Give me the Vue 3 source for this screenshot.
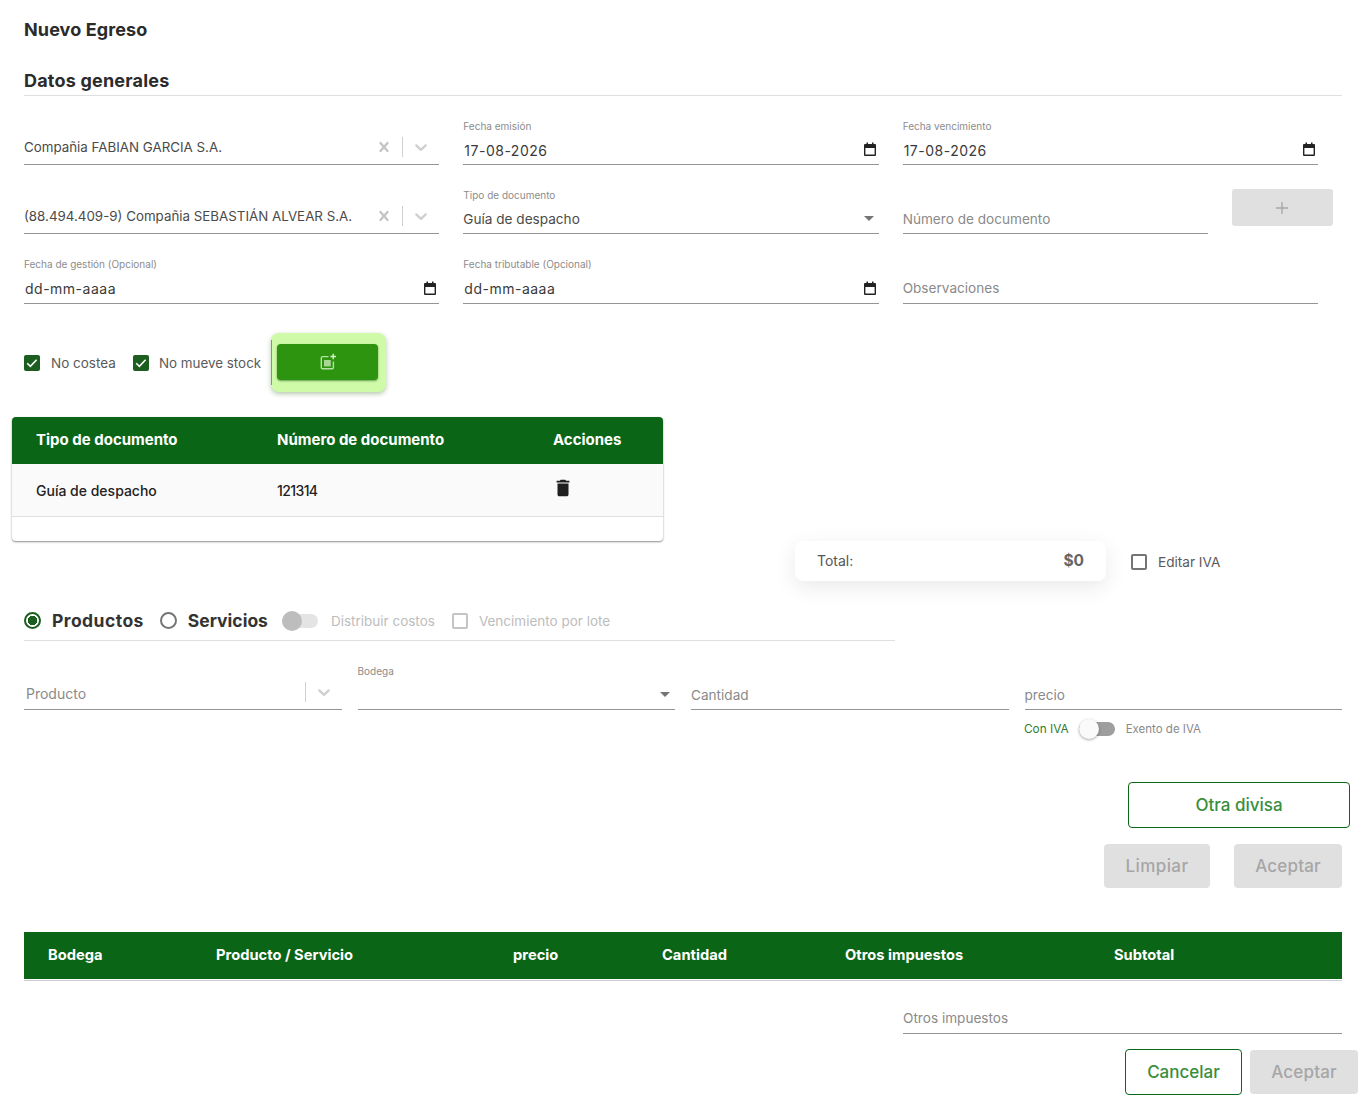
<script setup>
const cal = "M3 2h1.5V0.6H6V2h4V0.6h1.5V2H13a1 1 0 0 1 1 1v10a1 1 0 0 1-1 1H3a1 1 0 0 1-1-1V3a1 1 0 0 1 1-1zM3.4 6v6.6h9.2V6z";
const clearIcon = "M14.348 14.849c-0.469 0.469-1.229 0.469-1.697 0l-2.651-3.030-2.651 3.029c-0.469 0.469-1.229 0.469-1.697 0-0.469-0.469-0.469-1.229 0-1.697l2.758-3.15-2.759-3.152c-0.469-0.469-0.469-1.228 0-1.697s1.228-0.469 1.697 0l2.652 3.031 2.651-3.031c0.469-0.469 1.228-0.469 1.697 0s0.469 1.229 0 1.697l-2.758 3.152 2.758 3.15c0.469 0.469 0.469 1.229 0 1.698z";
const chevron = "M4.516 7.548c0.436-0.446 1.043-0.481 1.576 0l3.908 3.747 3.908-3.747c0.533-0.481 1.141-0.446 1.574 0 0.436 0.445 0.408 1.197 0 1.615-0.406 0.418-4.695 4.502-4.695 4.502-0.217 0.223-0.502 0.335-0.787 0.335s-0.57-0.112-0.789-0.335c0 0-4.287-4.084-4.695-4.502s-0.436-1.17 0-1.615z";
const detailCols = ["Bodega", "Producto / Servicio", "precio", "Cantidad", "Otros impuestos", "Subtotal"];
</script>

<template>
  <div class="page">
    <h1 class="title">Nuevo Egreso</h1>
    <h2 class="section">Datos generales</h2>

    <div class="form3">
      <div class="field select">
        <span class="text">Compañia FABIAN GARCIA S.A.</span>
        <svg class="x" viewBox="0 0 20 20"><path :d="clearIcon" /></svg>
        <i class="sep"></i>
        <svg class="chev" viewBox="0 0 20 20"><path :d="chevron" /></svg>
      </div>
      <div class="field">
        <label>Fecha emisión</label>
        <div class="value"><span class="date">17-08-2026</span><svg class="cal" viewBox="0 0 16 16"><path :d="cal" fill-rule="evenodd" /></svg></div>
      </div>
      <div class="field">
        <label>Fecha vencimiento</label>
        <div class="value"><span class="date">17-08-2026</span><svg class="cal" viewBox="0 0 16 16"><path :d="cal" fill-rule="evenodd" /></svg></div>
      </div>

      <div class="field select">
        <span class="text">(88.494.409-9) Compañia SEBASTIÁN ALVEAR S.A.</span>
        <svg class="x" viewBox="0 0 20 20"><path :d="clearIcon" /></svg>
        <i class="sep"></i>
        <svg class="chev" viewBox="0 0 20 20"><path :d="chevron" /></svg>
      </div>
      <div class="field">
        <label>Tipo de documento</label>
        <div class="value"><span class="text">Guía de despacho</span><i class="caret"></i></div>
      </div>
      <div class="doc-number">
        <div class="field grow">
          <div class="value"><span class="ph">Número de documento</span></div>
        </div>
        <button class="plus" disabled>
          <svg viewBox="0 0 14 14" width="14" height="14"><path d="M7 1v12M1 7h12" stroke="#a6a6a6" stroke-width="1.3" fill="none" /></svg>
        </button>
      </div>

      <div class="field low">
        <label>Fecha de gestión (Opcional)</label>
        <div class="value"><span class="date">dd-mm-aaaa</span><svg class="cal" viewBox="0 0 16 16"><path :d="cal" fill-rule="evenodd" /></svg></div>
      </div>
      <div class="field low">
        <label>Fecha tributable (Opcional)</label>
        <div class="value"><span class="date">dd-mm-aaaa</span><svg class="cal" viewBox="0 0 16 16"><path :d="cal" fill-rule="evenodd" /></svg></div>
      </div>
      <div class="field low">
        <div class="value"><span class="ph">Observaciones</span></div>
      </div>
    </div>

    <div class="options">
      <span class="check on"><svg viewBox="0 0 16 16"><path d="M3.2 8.2l3.2 3.2 6.2-6.6" stroke="#fff" stroke-width="1.6" fill="none" /></svg></span>
      <span class="opt-label first">No costea</span>
      <span class="check on"><svg viewBox="0 0 16 16"><path d="M3.2 8.2l3.2 3.2 6.2-6.6" stroke="#fff" stroke-width="1.6" fill="none" /></svg></span>
      <span class="opt-label second">No mueve stock</span>
      <div class="glow">
        <button class="add-doc">
          <svg viewBox="0 0 18 18" width="18" height="18">
            <path d="M9.5 3.6H3.6a1.3 1.3 0 0 0-1.3 1.3v9.5a1.3 1.3 0 0 0 1.3 1.3h9.5a1.3 1.3 0 0 0 1.3-1.3V8.6" stroke="#b9e0a6" stroke-width="1.4" fill="none" />
            <rect x="5" y="7" width="6.8" height="6.4" fill="#a9d595" />
            <path d="M14.2 0.8v5.4M11.5 3.5h5.4" stroke="#d9f2cd" stroke-width="1.4" fill="none" />
          </svg>
        </button>
      </div>
    </div>

    <div class="doc-table">
      <div class="doc-row head">
        <span>Tipo de documento</span>
        <span>Número de documento</span>
        <span>Acciones</span>
      </div>
      <div class="doc-row body">
        <span>Guía de despacho</span>
        <span class="num">121314</span>
        <span class="trash"><svg viewBox="0 0 24 24" width="22" height="22"><path d="M6 19c0 1.1.9 2 2 2h8c1.1 0 2-.9 2-2V7H6v12zM19 4h-3.5l-1-1h-5l-1 1H5v2h14V4z" fill="#1f1f1f" /></svg></span>
      </div>
      <div class="doc-foot"></div>
    </div>

    <div class="totals">
      <div class="total-card">
        <span>Total:</span>
        <b>$0</b>
      </div>
      <span class="check"></span>
      <span class="edit-iva">Editar IVA</span>
    </div>

    <div class="kind">
      <span class="radio on"></span>
      <span class="kind-label wide-label">Productos</span>
      <span class="radio"></span>
      <span class="kind-label">Servicios</span>
      <span class="switch off"><i></i></span>
      <span class="muted">Distribuir costos</span>
      <span class="check disabled"></span>
      <span class="muted">Vencimiento por lote</span>
    </div>

    <div class="form4">
      <div class="field select product">
        <span class="ph">Producto</span>
        <i class="sep"></i>
        <svg class="chev" viewBox="0 0 20 20"><path :d="chevron" /></svg>
      </div>
      <div class="field">
        <label>Bodega</label>
        <div class="value"><span class="text"></span><i class="caret"></i></div>
      </div>
      <div class="field">
        <div class="value"><span class="ph">Cantidad</span></div>
      </div>
      <div class="field">
        <div class="value"><span class="ph">precio</span></div>
      </div>
    </div>

    <div class="iva">
      <span class="iva-on">Con IVA</span>
      <span class="switch iva-switch"><i></i></span>
      <span class="iva-off">Exento de IVA</span>
    </div>

    <div class="divisa">
      <button class="btn outline wide">Otra divisa</button>
    </div>
    <div class="actions">
      <button class="btn gray limpiar" disabled>Limpiar</button>
      <button class="btn gray aceptar" disabled>Aceptar</button>
    </div>

    <div class="detail-head">
      <span v-for="col in detailCols" :key="col">{{ col }}</span>
    </div>

    <div class="others">
      <div class="field grow">
        <div class="value"><span class="ph">Otros impuestos</span></div>
      </div>
    </div>

    <div class="footer">
      <button class="btn outline cancel">Cancelar</button>
      <button class="btn gray aceptar" disabled>Aceptar</button>
    </div>
  </div>
</template>

<style>
body {
  background: #fff;
}
</style>

<style scoped>
.page {
  font-family: Inter, "Noto Sans", sans-serif;
  color: #333;
  height: 1103px;
  overflow: hidden;
}

button {
  font-family: inherit;
}

.title {
  margin: 0 24px;
  height: 60px;
  box-sizing: border-box;
  padding-bottom: 2px;
  display: flex;
  align-items: center;
  font-size: 18px;
  font-weight: 700;
  color: #2b2b2b;
  letter-spacing: 0.1px;
}

.section {
  margin: 0 24px;
  height: 36px;
  box-sizing: border-box;
  padding-top: 5px;
  display: flex;
  align-items: center;
  font-size: 18px;
  font-weight: 700;
  color: #2b2b2b;
  letter-spacing: 0.2px;
  border-bottom: 1px solid #e0e0e0;
}

.form3 {
  display: grid;
  grid-template-columns: repeat(3, 1fr);
  grid-template-rows: 69px 69px 70px;
  column-gap: 24px;
  padding: 0 48px 0 24px;
}

.field {
  display: flex;
  flex-direction: column;
  justify-content: flex-end;
  min-width: 0;
  border-bottom: 1px solid #949494;
  align-self: end;
}

.field label {
  font-size: 10px;
  line-height: 12px;
  color: #8c8c8c;
  margin-bottom: 4px;
}

.low label {
  margin-bottom: 5px;
}

.value {
  height: 28px;
  display: flex;
  align-items: center;
  justify-content: space-between;
  font-size: 14px;
}

.low .value span {
  margin-bottom: 2px;
}

.text {
  font-size: 13.6px;
  color: #4a4a4a;
  white-space: nowrap;
}

.ph {
  font-size: 13.6px;
  color: #8a8a8a;
  white-space: nowrap;
}

.date {
  font-size: 14px;
  color: #3a3a3a;
  letter-spacing: 0.5px;
  padding-left: 1px;
}

.cal {
  width: 16px;
  height: 16px;
  margin-right: 1px;
  fill: #222;
}

.select {
  flex-direction: row;
  align-items: center;
  justify-content: flex-start;
  height: 34px;
  box-sizing: border-box;
  padding-bottom: 1px;
}

.select .text,
.select .ph {
  flex: 1;
}

.select .text {
  font-size: 13.35px;
}

.select .ph {
  font-size: 14px;
  margin-top: 2px;
}

.x {
  width: 20px;
  height: 20px;
  fill: #c4c4c4;
  margin-right: 8px;
}

.sep {
  display: block;
  width: 1px;
  height: 20px;
  background: #d0d0d0;
  margin-right: 8px;
}

.chev {
  width: 20px;
  height: 20px;
  fill: #cfcfcf;
  margin-right: 8px;
}

.caret {
  display: block;
  width: 0;
  height: 0;
  margin: 0 5px 1px 0;
  border-left: 5px solid transparent;
  border-right: 5px solid transparent;
  border-top: 5px solid #757575;
}

.doc-number {
  display: flex;
  align-items: flex-end;
  gap: 24px;
  margin-right: -15px;
}

.grow {
  flex: 1;
}

.plus {
  width: 101px;
  height: 37px;
  margin-bottom: 8px;
  border: 0;
  border-radius: 3px;
  background: #e0e0e0;
  display: flex;
  align-items: center;
  justify-content: center;
  padding: 0 2px 0 0;
}

.options {
  margin-top: 29px;
  padding-left: 24px;
  height: 59px;
  display: flex;
  align-items: center;
}

.check {
  box-sizing: border-box;
  width: 16px;
  height: 16px;
  border: 2px solid #757575;
  border-radius: 2px;
  flex-shrink: 0;
  display: block;
}

.check.on {
  background: #1b5e20;
  border: 0;
}

.check.on svg {
  display: block;
}

.check.disabled {
  border-color: #c4c4c4;
}

.opt-label {
  margin-left: 11px;
  font-size: 13.5px;
  color: #5a5a5a;
}

.opt-label.first {
  margin-right: 17px;
}

.opt-label.second {
  margin-left: 10px;
  font-size: 13.4px;
}

.glow {
  position: relative;
  margin-left: 10px;
  width: 115px;
  height: 59px;
  box-sizing: border-box;
  padding: 11px 8px 12px 6px;
  background: #cffba8;
  border-radius: 8px;
  box-shadow: 0 2px 5px rgba(90, 130, 70, 0.45);
}

.glow::before {
  content: "";
  position: absolute;
  left: 0;
  top: 7px;
  bottom: 7px;
  width: 1px;
  background: #5ab83a;
}

.add-doc {
  width: 101px;
  height: 36px;
  border: 0;
  border-radius: 4px;
  background: #2d9410;
  box-shadow: 0 1px 2px rgba(0, 60, 0, 0.5);
  display: flex;
  align-items: center;
  justify-content: center;
  padding: 0;
}

.doc-table {
  margin: 25px 0 0 12px;
  width: 651px;
  border-radius: 4px;
  overflow: hidden;
  background: #fff;
  box-shadow: 0 1px 2px rgba(0, 0, 0, 0.45);
  height: 124px;
}

.doc-row {
  display: grid;
  grid-template-columns: 241px 276px 1fr;
  padding-left: 24px;
  align-items: center;
}

.doc-row.head {
  height: 47px;
  box-sizing: border-box;
  padding-bottom: 2px;
  background: #0b6516;
  color: #fff;
  font-size: 15px;
  font-weight: 700;
}

.doc-row.body {
  height: 53px;
  box-sizing: border-box;
  background: #fafafa;
  border-bottom: 1px solid #e0e0e0;
  color: #222;
  font-size: 14px;
  font-weight: 500;
}

.num {
  letter-spacing: -0.6px;
}

.doc-foot {
  height: 24px;
}

.trash {
  margin: -5px 0 0 -1px;
  height: 22px;
}

.trash svg {
  display: block;
}

.totals {
  display: flex;
  align-items: center;
  padding-left: 795px;
  height: 40px;
}

.total-card {
  width: 311px;
  height: 40px;
  box-sizing: border-box;
  padding: 0 22px 2px;
  border-radius: 8px;
  background: #fff;
  box-shadow: 0 6px 22px rgba(0, 0, 0, 0.09);
  display: flex;
  align-items: center;
  justify-content: space-between;
  font-size: 14px;
  color: #555;
}

.total-card b {
  font-size: 15.5px;
  font-weight: 700;
  color: #666;
}

.totals .check {
  margin: 2px 0 0 25px;
}

.edit-iva {
  margin: 1px 0 0 11px;
  font-size: 13.6px;
  color: #5a5a5a;
}

.kind {
  margin: 20px 0 0 24px;
  width: 871px;
  height: 40px;
  box-sizing: border-box;
  border-bottom: 1px solid #e0e0e0;
  display: flex;
  align-items: center;
}

.radio {
  box-sizing: border-box;
  width: 17px;
  height: 17px;
  border: 2px solid #757575;
  border-radius: 50%;
  flex-shrink: 0;
}

.radio.on {
  border-color: #1b5e20;
  background: radial-gradient(circle, #1b5e20 0 4.5px, #fff 5px);
}

.kind-label {
  margin: 0 14px 0 11px;
  font-size: 17.5px;
  font-weight: 700;
  color: #333;
}

.wide-label {
  margin-right: 16px;
  letter-spacing: 0.45px;
}

.switch {
  position: relative;
  display: block;
  width: 36px;
  height: 14px;
  border-radius: 7px;
  background: #9e9e9e;
  flex-shrink: 0;
}

.switch i {
  position: absolute;
  left: 0;
  top: -3px;
  width: 20px;
  height: 20px;
  border-radius: 50%;
  background: #fafafa;
  box-shadow: 0 1px 3px rgba(0, 0, 0, 0.35);
}

.switch.off {
  background: #e4e4e4;
}

.switch.off i {
  background: #bdbdbd;
  box-shadow: none;
}

.muted {
  font-size: 13.5px;
  color: #bdbdbd;
  margin: 0 17px 0 13px;
}

.check.disabled + .muted {
  margin-left: 11px;
}

.form4 {
  display: grid;
  grid-template-columns: repeat(4, 1fr);
  column-gap: 16px;
  padding: 0 24px;
  height: 69px;
  align-items: end;
}

.product .ph {
  padding-left: 2px;
}

.iva {
  margin-left: 1024px;
  height: 38px;
  display: flex;
  align-items: center;
  font-size: 11.8px;
}

.iva-on {
  color: #2e7d32;
  margin-right: 10px;
}

.iva-off {
  color: #8a8a8a;
  margin-left: 11px;
  font-size: 11.5px;
}

.divisa {
  margin: 34px 16px 0 0;
  display: flex;
  justify-content: flex-end;
}

.actions {
  margin: 16px 24px 0 0;
  display: flex;
  justify-content: flex-end;
  gap: 24px;
}

.btn {
  font-size: 17px;
  font-weight: 500;
  border-radius: 4px;
  padding: 0;
  box-sizing: border-box;
}

.outline {
  background: #fff;
  border: 1px solid #0b6516;
  color: #388e3c;
  height: 46px;
}

.wide {
  width: 222px;
}

.gray {
  background: #e0e0e0;
  border: 0;
  color: #a6a6a6;
  height: 44px;
}

.limpiar {
  width: 106px;
  letter-spacing: 0.4px;
}

.aceptar {
  width: 108px;
  letter-spacing: 0.2px;
}

.detail-head {
  margin: 44px 24px 0;
  height: 47px;
  box-sizing: border-box;
  padding: 0 0 2px 24px;
  background: #0b6516;
  color: #fff;
  font-size: 14.7px;
  font-weight: 700;
  display: grid;
  grid-template-columns: 168px 297px 149px 183px 269px 1fr;
  align-items: center;
  box-shadow: 0 1px 0 #fff, 0 2px 0 #cfcfcf;
}

.others {
  margin: 3px 24px 0 903px;
  height: 52px;
  display: flex;
  align-items: flex-end;
}

.others .value span {
  margin-bottom: 2px;
}

.footer {
  margin: 15px 8px 0 0;
  display: flex;
  justify-content: flex-end;
  align-items: center;
  gap: 8px;
}

.cancel {
  width: 117px;
}
</style>
